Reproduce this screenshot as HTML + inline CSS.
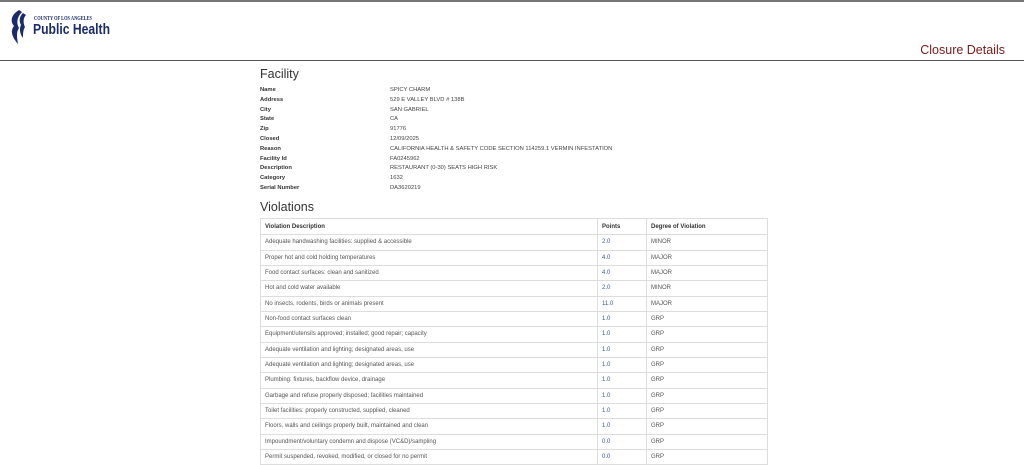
<!DOCTYPE html>
<html><head><meta charset="utf-8"><style>
*{margin:0;padding:0;box-sizing:border-box}
body{width:1024px;height:464px;background:#fff;font-family:"Liberation Sans",Verdana,sans-serif;position:relative;overflow:hidden;color:#333}
.topbar{position:absolute;left:0;top:0;width:1024px;height:2px;background:#777}
.hline{position:absolute;left:0;top:60px;width:1024px;height:1px;background:#555}
.cd{position:absolute;right:19px;top:43px;font-size:12.5px;color:#7a1a1a}
.logo{position:absolute;left:8px;top:7px}
h2{position:absolute;left:260px;font-weight:normal;font-size:12.5px;color:#333}
.f{position:absolute;left:260px;font-size:5.8px;line-height:9.8px;top:86px}
.f b{display:inline-block;width:130px;color:#333}
.f span{color:#444}
.tbl{position:absolute;left:260px;top:218px;width:508px;border:1px solid #ddd}
.r{height:15.33px;border-top:1px solid #ddd;display:flex;font-size:6px;align-items:center;color:#555}
.r:first-child{border-top:none}
.r div{height:100%;display:flex;align-items:center;padding-left:4px}
.c1{width:337px;border-right:1px solid #ddd}
.c2{width:49px;border-right:1px solid #ddd;color:#3a5a8a}
.c3{flex:1}
.h{font-weight:bold;color:#333}
.h .c2{color:#333}
</style></head><body>
<div class="topbar"></div>
<div class="logo">
<svg width="110" height="40" viewBox="0 0 110 40">
<path d="M11 3 C3 8 2 14 6 19 C2 24 4 30 10 37 C9 31 8 25 11 21 C8 16 9 10 14 5 Z" fill="#1a2a6c"/>
<path d="M15 6 C11 10 11 14 13 18 C11 22 12 27 15 31 C15 27 15 23 17 20 C15 16 15 11 18 8 Z" fill="#1a2a6c"/>
<text x="26" y="13" font-family="Liberation Serif,serif" font-size="6.4" font-weight="bold" fill="#1a2a6c" textLength="58" lengthAdjust="spacingAndGlyphs">COUNTY OF LOS ANGELES</text>
<text x="25" y="27" font-family="Liberation Sans,sans-serif" font-size="14.5" font-weight="bold" fill="#1a2a6c" textLength="77" lengthAdjust="spacingAndGlyphs">Public Health</text>
</svg></div>
<div class="cd">Closure Details</div>
<div class="hline"></div>
<h2 style="top:67px">Facility</h2>
<div class="f">
<div><b>Name</b><span>SPICY CHARM</span></div>
<div><b>Address</b><span>529 E VALLEY BLVD # 138B</span></div>
<div><b>City</b><span>SAN GABRIEL</span></div>
<div><b>State</b><span>CA</span></div>
<div><b>Zip</b><span>91776</span></div>
<div><b>Closed</b><span>12/09/2025</span></div>
<div><b>Reason</b><span>CALIFORNIA HEALTH &amp; SAFETY CODE SECTION 114259.1 VERMIN INFESTATION</span></div>
<div><b>Facility Id</b><span>FA0245962</span></div>
<div><b>Description</b><span>RESTAURANT (0-30) SEATS HIGH RISK</span></div>
<div><b>Category</b><span>1632</span></div>
<div><b>Serial Number</b><span>DA3620219</span></div>
</div>
<h2 style="top:200px">Violations</h2>
<div class="tbl">
<div class="r h"><div class="c1">Violation Description</div><div class="c2">Points</div><div class="c3">Degree of Violation</div></div>
<div class="r"><div class="c1">Adequate handwashing facilities: supplied &amp; accessible</div><div class="c2">2.0</div><div class="c3">MINOR</div></div>
<div class="r"><div class="c1">Proper hot and cold holding temperatures</div><div class="c2">4.0</div><div class="c3">MAJOR</div></div>
<div class="r"><div class="c1">Food contact surfaces: clean and sanitized</div><div class="c2">4.0</div><div class="c3">MAJOR</div></div>
<div class="r"><div class="c1">Hot and cold water available</div><div class="c2">2.0</div><div class="c3">MINOR</div></div>
<div class="r"><div class="c1">No insects, rodents, birds or animals present</div><div class="c2">11.0</div><div class="c3">MAJOR</div></div>
<div class="r"><div class="c1">Non-food contact surfaces clean</div><div class="c2">1.0</div><div class="c3">GRP</div></div>
<div class="r"><div class="c1">Equipment/utensils approved; installed; good repair; capacity</div><div class="c2">1.0</div><div class="c3">GRP</div></div>
<div class="r"><div class="c1">Adequate ventilation and lighting; designated areas, use</div><div class="c2">1.0</div><div class="c3">GRP</div></div>
<div class="r"><div class="c1">Adequate ventilation and lighting; designated areas, use</div><div class="c2">1.0</div><div class="c3">GRP</div></div>
<div class="r"><div class="c1">Plumbing: fixtures, backflow device, drainage</div><div class="c2">1.0</div><div class="c3">GRP</div></div>
<div class="r"><div class="c1">Garbage and refuse properly disposed; facilities maintained</div><div class="c2">1.0</div><div class="c3">GRP</div></div>
<div class="r"><div class="c1">Toilet facilities: properly constructed, supplied, cleaned</div><div class="c2">1.0</div><div class="c3">GRP</div></div>
<div class="r"><div class="c1">Floors, walls and ceilings properly built, maintained and clean</div><div class="c2">1.0</div><div class="c3">GRP</div></div>
<div class="r"><div class="c1">Impoundment/voluntary condemn and dispose (VC&amp;D)/sampling</div><div class="c2">0.0</div><div class="c3">GRP</div></div>
<div class="r"><div class="c1">Permit suspended, revoked, modified, or closed for no permit</div><div class="c2">0.0</div><div class="c3">GRP</div></div>
</div>
</body></html>
